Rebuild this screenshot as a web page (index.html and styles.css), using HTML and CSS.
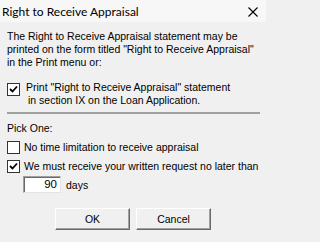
FILE: index.html
```html
<!DOCTYPE html>
<html>
<head>
<meta charset="utf-8">
<link rel="stylesheet" href="styles.css">
</head>
<body>
<div class="dialog">
  <div class="titlebar">
    <span class="title">Right to Receive Appraisal</span>
    <svg class="close" width="10" height="10" viewBox="0 0 10 10"><path d="M0.5 0.5 L9.5 9.5 M9.5 0.5 L0.5 9.5" stroke="#000" stroke-width="1.1" fill="none"/></svg>
  </div>
  <div class="content">
    <p class="intro">The Right to Receive Appraisal statement may be<br>printed on the form titled "Right to Receive Appraisal"<br>in the Print menu or:</p>
    <div class="check-row first">
      <span class="box checked"><svg width="9" height="9" viewBox="0 0 9 9"><path d="M1 4 L3.5 6.5 L8 1.5" stroke="#000" stroke-width="1.8" fill="none"/></svg></span>
      <span class="label">Print "Right to Receive Appraisal" statement<br><span class="indent">in section IX on the Loan Application.</span></span>
    </div>
    <div class="separator"></div>
    <div class="pick">Pick One:</div>
    <div class="check-row opt1">
      <span class="box"></span>
      <span class="label">No time limitation to receive appraisal</span>
    </div>
    <div class="check-row opt2">
      <span class="box checked"><svg width="9" height="9" viewBox="0 0 9 9"><path d="M1 4 L3.5 6.5 L8 1.5" stroke="#000" stroke-width="1.8" fill="none"/></svg></span>
      <span class="label">We must receive your written request no later than</span>
    </div>
    <div class="days-row">
      <span class="input">90</span>
      <span class="days">days</span>
    </div>
    <div class="buttons">
      <span class="btn">OK</span>
      <span class="btn">Cancel</span>
    </div>
  </div>
</div>
</body>
</html>
```
FILE: styles.css
```css
html, body {
  margin: 0;
  padding: 0;
  background: #f0f0f0;
}
.dialog {
  width: 266px;
  height: 242px;
  background: #f0f0f0;
  font-family: "Liberation Sans", Arial, sans-serif;
  font-size: 10.5px;
  color: #000;
  overflow: hidden;
  white-space: nowrap;
}
.titlebar {
  height: 22px;
  background: #f7f7f7;
  display: flex;
  align-items: center;
  justify-content: space-between;
  padding: 0 8px 0 2px;
}
.title {
  font-family: "Lato", "Liberation Sans", sans-serif;
  font-size: 12px;
  color: #000;
  margin-top: 1px;
}
.close {
  margin-top: 2px;
}
.content {
  padding: 0 0 0 7px;
}
.intro {
  margin: 8px 0 0 0;
  line-height: 13px;
}
.check-row {
  display: flex;
  align-items: flex-start;
  line-height: 13px;
}
.check-row.first {
  margin-top: 12px;
}
.box {
  width: 13px;
  height: 13px;
  box-sizing: border-box;
  background: #fff;
  border: 1px solid #333;
  display: flex;
  align-items: center;
  justify-content: center;
  flex: none;
}
.box svg {
  display: block;
}
.check-row.first .box {
  margin-top: 2px;
}
.check-row.first .label {
  margin-left: 6px;
}
.indent {
  padding-left: 2px;
}
.label {
  margin-left: 4px;
}
.separator {
  margin-top: 5px;
  width: 253px;
  height: 2px;
  background: #a0a0a0;
}
.pick {
  margin-top: 8px;
  line-height: 13px;
}
.check-row.opt1 {
  margin-top: 6px;
}
.check-row.opt2 {
  margin-top: 6px;
}
.days-row {
  display: flex;
  align-items: center;
  margin-top: 3px;
  margin-left: 16px;
}
.input {
  width: 38px;
  height: 17px;
  box-sizing: border-box;
  background: #fff;
  border-top: 1px solid #a0a0a0;
  border-left: 1px solid #a0a0a0;
  border-right: 1px solid #e3e3e3;
  border-bottom: 1px solid #e3e3e3;
  box-shadow: inset 1px 1px 0 #696969;
  text-align: right;
  padding-right: 3px;
  line-height: 15px;
  font-size: 11.5px;
}
.days {
  margin-left: 5px;
}
.buttons {
  display: flex;
  gap: 6px;
  margin-top: 15px;
  margin-left: 48px;
}
.btn {
  width: 75px;
  height: 22px;
  box-sizing: border-box;
  display: flex;
  align-items: center;
  justify-content: center;
  background: #f0f0f0;
  border-top: 1px solid #fff;
  border-left: 1px solid #fff;
  border-right: 1px solid #696969;
  border-bottom: 1px solid #696969;
  box-shadow: inset -1px -1px 0 #a0a0a0;
}
```
